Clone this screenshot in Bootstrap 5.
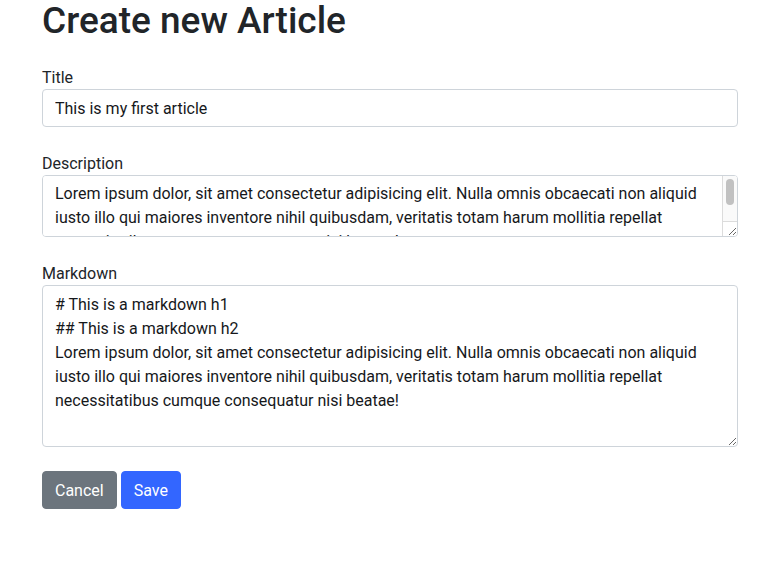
<!DOCTYPE html>
<html lang="en">
<head>
<meta charset="utf-8">
<meta name="viewport" content="width=device-width, initial-scale=1">
<title>Create new Article</title>
<link href="https://cdn.jsdelivr.net/npm/bootstrap@5.3.0/dist/css/bootstrap.min.css" rel="stylesheet">
<style>
body { font-family: Roboto, "Liberation Sans", sans-serif; font-size: 16px; color: #212529; }
.page { padding: 0 33px 0 42px; }
.page-title { font-size: 37px; line-height: 42px; margin-bottom: 23px; }
.page label { line-height: 22px; padding-top: 2px; }
.page .form-control { padding-top: 7px; padding-bottom: 5px; border-color: #ced4da; border-radius: 4px; color: #16181b; }
.page .btn { border-radius: 4px; padding-top: 7px; padding-bottom: 5px; }
.page .short-box { height: 62px; padding-top: 6px; overflow-y: scroll; }
.long-box { height: 162px; }
.scroll-track { top: 1px; right: 1px; bottom: 1px; width: 15px; border-left: 1px solid #dcdcdc; pointer-events: none; }
.scroll-lane { height: 45px; padding: 3px; background: #fafafa; border-radius: 0 3px 0 0; }
.scroll-thumb { width: 8px; height: 26px; background: #c1c1c1; border-radius: 4px; }
.scroll-corner { height: 15px; border-top: 1px solid #dcdcdc; }
.btn-save { --bs-btn-bg: #3366ff; --bs-btn-border-color: #3366ff; }
</style>
</head>
<body>
<main class="page">
<h1 class="page-title">Create new Article</h1>
<form>
<div class="mb-4"><label for="title" class="d-block">Title</label>
<input id="title" type="text" class="form-control" value="This is my first article"></div>
<div class="mb-4"><label for="description" class="d-block">Description</label>
<div class="position-relative">
<textarea id="description" class="form-control short-box">Lorem ipsum dolor, sit amet consectetur adipisicing elit. Nulla omnis obcaecati non aliquid iusto illo qui maiores inventore nihil quibusdam, veritatis totam harum mollitia repellat necessitatibus cumque consequatur nisi beatae!</textarea>
<div class="scroll-track position-absolute" aria-hidden="true"><div class="scroll-lane"><div class="scroll-thumb"></div></div><div class="scroll-corner"></div></div>
</div></div>
<div class="mb-4"><label for="markdown" class="d-block">Markdown</label>
<textarea id="markdown" class="form-control long-box"># This is a markdown h1
## This is a markdown h2
Lorem ipsum dolor, sit amet consectetur adipisicing elit. Nulla omnis obcaecati non aliquid iusto illo qui maiores inventore nihil quibusdam, veritatis totam harum mollitia repellat necessitatibus cumque consequatur nisi beatae!</textarea></div>
<div class="d-flex gap-1"><a href="#" class="btn btn-secondary">Cancel</a><button type="submit" class="btn btn-primary btn-save">Save</button></div>
</form>
</main>
<script src="https://cdn.jsdelivr.net/npm/bootstrap@5.3.0/dist/js/bootstrap.bundle.min.js"></script>
</body>
</html>
